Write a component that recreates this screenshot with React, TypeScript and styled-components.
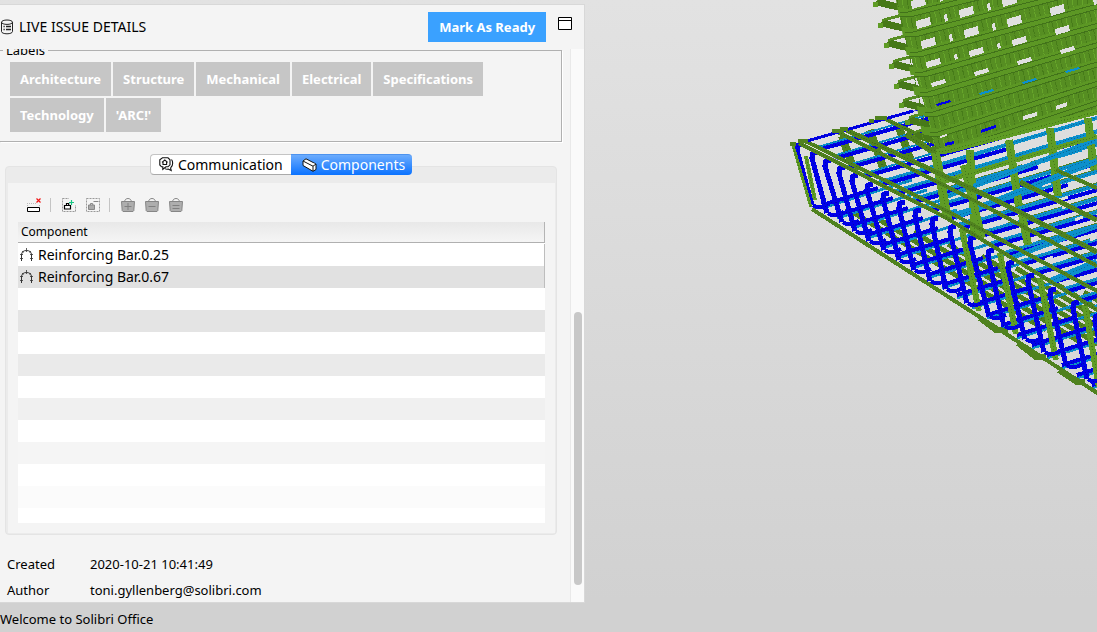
import React from "react";
import styled, { createGlobalStyle, css } from "styled-components";

const GlobalStyle = createGlobalStyle`
  * { box-sizing: border-box; }
  body {
    margin: 0;
    font-family: "Lucida Grande", "Noto Sans", "Open Sans", sans-serif;
    font-size: 13px;
    line-height: 18px;
    color: #000;
  }
  button { font: inherit; color: inherit; border: 0; padding: 0; background: none; }
`;

const Page = styled.div`
  display: flex;
  flex-direction: column;
  height: 100vh;
  overflow: hidden;
  background: linear-gradient(#e2e2e2, #d1d1d1 95%);
`;

const Workspace = styled.div`
  flex: 1;
  min-height: 0;
  display: grid;
  grid-template-columns: minmax(500px, 8fr) 7fr;
`;

const Panel = styled.section`
  display: flex;
  flex-direction: column;
  min-height: 0;
  margin-top: 4px;
  background: #f4f4f4;
  border: 1px solid #d8d8d8;
  border-left: 0;
`;

const PanelHeader = styled.header`
  display: flex;
  align-items: center;
  height: 44px;
  flex: none;
  padding: 0 12px 0 0;
`;

const Title = styled.h1`
  flex: 1;
  margin: 0 0 0 5px;
  font-size: 14px;
  font-weight: 400;
  line-height: 18px;
`;

const ReadyButton = styled.button`
  height: 30px;
  padding: 0 11px;
  background: #3aa1ff;
  color: #fff;
  font-weight: 700;
`;

const WindowButton = styled.button`
  align-self: flex-start;
  margin: 12px 0 0 12px;
  line-height: 0;
`;

const PanelBody = styled.div`
  flex: 1;
  min-height: 0;
  display: flex;
`;

const Content = styled.div`
  flex: 1;
  min-width: 0;
  overflow: hidden;
`;

const ScrollTrack = styled.div`
  flex: none;
  width: 14px;
  padding: 263px 2px 17px;
  border-left: 1px solid #e9e9e9;
  background: #fafafa;
`;

const ScrollThumb = styled.div`
  width: 8px;
  height: 100%;
  margin-left: 1px;
  border-radius: 4px;
  background: #c8c8c8;
`;

const LabelGroup = styled.fieldset`
  display: flex;
  flex-wrap: wrap;
  align-content: flex-start;
  gap: 2px;
  min-width: 0;
  height: 101px;
  margin: -8px 8px 0 0;
  padding: 3px 8px 0 10px;
  border: 1px solid #b0b0b0;
  border-left: 0;
  box-shadow: 1px 1px #fff;
`;

const Legend = styled.legend`
  margin-left: -7px;
  padding: 0 3px;
  line-height: 18px;
`;

const LabelTag = styled.button`
  height: 34px;
  padding: 0 10px;
  background: #c6c6c6;
  color: #fff;
  font-weight: 700;
`;

const Tabs = styled.div`
  position: relative;
  display: flex;
  justify-content: center;
  margin: 12px 13px -9px 5px;
`;

const Tab = styled.button<{ $active?: boolean }>`
  display: flex;
  align-items: center;
  gap: 4px;
  height: 21px;
  padding: 0 8px;
  font-size: 14px;
  line-height: 18px;
  border: 1px solid #c4c4c4;
  border-right: 0;
  border-bottom-color: #aaa;
  border-radius: 4px 0 0 4px;
  background: #fff;
  ${(p) =>
    p.$active &&
    css`
      border: 0;
      border-top: 1px solid #4d93ee;
      border-radius: 0 4px 4px 0;
      background: linear-gradient(#6cacfd, #0a72ff);
      color: #fff;
      padding: 0 7px 0 11px;
    `}
`;

const TabBox = styled.div`
  margin: 0 13px 0 5px;
  border: 1px solid #e4e4e4;
  border-radius: 4px;
  background: #ebebeb;
  padding: 16px 1px 1px 2px;
`;

const TabPage = styled.div`
  padding: 15px 10px 10px;
  background: #f4f4f4;
`;

const Toolbar = styled.div`
  display: flex;
  align-items: center;
  gap: 10px;
  height: 14px;
  margin: 0 0 10px 9px;
`;

const ToolButton = styled.button`
  width: 14px;
  height: 14px;
  line-height: 0;
`;

const Divider = styled.span`
  width: 1px;
  height: 14px;
  margin: 0 1px 0 -1px;
  background: #c4c4c4;
`;

const Grid = styled.div`
  height: 301px;
  overflow: hidden;
  background: #fff;
`;

const Table = styled.table`
  width: 100%;
  border-collapse: separate;
  border-spacing: 0;
`;

const HeadCell = styled.th`
  height: 21px;
  padding: 0 3px;
  border-right: 1px solid #b4b4b4;
  border-bottom: 1px solid #b0b0b0;
  background: linear-gradient(#e8e8e8, #f5f5f5);
  font-size: 12px;
  font-weight: 400;
  line-height: 18px;
  text-align: left;
`;

const TableBody = styled.tbody`
  &::before {
    content: "";
    display: table-row;
    height: 1px;
  }
`;

const Row = styled.tr<{ $tone: string }>`
  background: ${(p) => p.$tone};
`;

const Cell = styled.td<{ $filled?: boolean }>`
  height: 22px;
  padding: 0 1px;
  border-right: ${(p) => (p.$filled ? "1px solid #bdbdbd" : "0")};
  line-height: 18px;
`;

const CellContent = styled.div`
  display: flex;
  align-items: center;
  gap: 4px;
  font-size: 14px;
`;

const Details = styled.dl`
  display: grid;
  grid-template-columns: 83px 1fr;
  margin: 16px 0 0 7px;
  line-height: 26px;
`;

const Term = styled.dt``;
const Value = styled.dd`
  margin: 0;
`;

const Viewport = styled.main`
  min-width: 0;
  min-height: 0;
  overflow: hidden;
`;

const Scene = styled.svg`
  display: block;
  width: 100%;
  height: 100%;
`;

const StatusBar = styled.footer`
  flex: none;
  height: 29px;
  padding-top: 7px;
  background: #d1d1d1;
`;

/* ---------- icons ---------- */

const DatabaseIcon = () => (
  <svg width="14" height="16" viewBox="0 0 14 16" fill="none" stroke="#222">
    <ellipse cx="7" cy="3.2" rx="5.5" ry="2.2" />
    <path d="M1.5 3.2v9.4c0 1.2 2.4 2.2 5.5 2.2s5.5-1 5.5-2.2V3.2" />
    <path d="M6 7.5h5M6 10.5h5M3.5 7.5h1.2M3.5 10.5h1.2" strokeWidth="1.3" />
  </svg>
);

const WindowIcon = () => (
  <svg width="14" height="13" viewBox="0 0 14 13" fill="#fff" stroke="#000">
    <path d="M.5.5h13v12H.5zM.5 3.5h13" />
  </svg>
);

const ChatIcon = () => (
  <svg width="15" height="15" viewBox="0 0 15 15" fill="none" stroke="#111" strokeWidth="1.1">
    <path d="M3.5.8h5.5l2 2v5l-2 2H7l-3.2 2.5V9.8H2.5L.8 8V2.800z" />
    <path d="M3 5.300 5.800 3l2.800 2.300M4 4.800V7.500h3.600V4.800" />
    <path d="M12.500 2.500c1.600 2 1.600 5.500-.3 7.500l-.6 1 .6 2.500-3-1.400c-1.200.2-2.400 0-3.200-.5" />
  </svg>
);

const BeamIcon = () => (
  <svg width="15" height="14" viewBox="0 0 15 14" fill="#fff" stroke="#111" strokeLinejoin="round">
    <path d="M1 3 4 .8 14 6v5.500L11 13.300 1 7.500z" />
    <path d="m1 3 10 5.200L14 6M11 8.200v5" />
  </svg>
);

const RemoveRowIcon = () => (
  <svg width="14" height="14" viewBox="0 0 14 14" fill="none">
    <path d="M.5 9.500h12v4H.5z" stroke="#000" fill="#fff" />
    <path d="M0 5.500h9M.5 5v4M12.500 7v2" stroke="#bbb" strokeDasharray="1 1" />
    <path d="m9.500.500 4 4m0-4-4 4" stroke="#f01818" strokeWidth="1.200" />
  </svg>
);

const BasketFrameIcon = ({ add }: { add?: boolean }) => (
  <svg width="14" height="14" viewBox="0 0 14 14" fill="none">
    <path d="M.5.500h13v13H.5z" stroke="#999" strokeDasharray="2 1" />
    {add ? (
      <>
        <path d="M7 0h7v7H7z" fill="#f4f4f4" />
        <path d="M2.500 7.500h6v3.500h-6zM4.500 7.500V5.500h2.200V7.500" stroke="#000" strokeWidth="1.200" fill="#fff" />
        <path d="M9.500 2v5M7 4.500h5" stroke="#16c784" strokeWidth="1.200" />
      </>
    ) : (
      <>
        <path d="M2.500 7h6v4.500h-6z" stroke="#888" fill="#aaa" />
        <path d="M4.500 7V5.500h2.200V7M7.500 3.500h5" stroke="#888" />
      </>
    )}
  </svg>
);

const BasketIcon = ({ mark }: { mark: string }) => (
  <svg width="14" height="14" viewBox="0 0 14 14" fill="none" stroke="#868686">
    <path d="M3.500 3.500C4 1.500 5.200.5 7 .5s3 1 3.500 3" />
    <path d="M.5 3.500h13l-.7 9.200-.8.800H2l-.8-.8z" fill="#aeaeae" />
    <path d={mark} stroke="#808080" />
  </svg>
);

const RebarIcon = () => (
  <svg width="15" height="14" viewBox="0 0 15 14" fill="none" stroke="#333">
    <path d="M2.500 13V7c0-3 2-4.500 5-4.500s5 1.500 5 4.500v6" />
    <path d="M7.500 0v4M1 6.500h3M1 10.500h3M11 6.500h3M11 10.500h3M3 3l1.500 1.500M12 3l-1.500 1.500" strokeWidth=".8" />
  </svg>
);

/* ---------- reinforcement model ---------- */

type Tone = "green" | "olive" | "blue" | "cyan";
const TONES: Record<Tone, [string, string]> = {
  green: ["#457a18", "#5f9c25"],
  olive: ["#3d6b17", "#50821f"],
  blue: ["#0000b4", "#0000e8"],
  cyan: ["#086a98", "#0c90cc"],
};

const Bar = ({ d, w = 4, tone }: { d: string; w?: number; tone: Tone }) => (
  <g fill="none" strokeLinejoin="round">
    <path d={d} stroke={TONES[tone][1]} strokeWidth={w} />
    <path d={d} stroke={TONES[tone][0]} strokeWidth={1} strokeDasharray="1 2" />
  </g>
);

const range = (n: number) => Array.from({ length: n }, (_, i) => i);

// Stirrups along the front face: top corner, then bottom corner.
const STIRRUPS: [number, number, number, number][] = [
  [797, 147, 812, 207], [812, 155, 827, 215], [825, 163, 842, 224], [839, 170, 855, 233],
  [852, 178, 869, 243], [867, 187, 884, 252], [883, 196, 899, 262], [899, 205, 914, 272],
  [915, 213, 930, 283], [932, 221, 946, 291], [950, 229, 967, 305], [970, 240, 989, 318],
  [988, 253, 1004, 328], [1008, 265, 1025, 341], [1028, 278, 1044, 354], [1050, 292, 1066, 367],
  [1073, 305, 1087, 381], [1095, 318, 1110, 396],
];

// Left tips of the column ties.
const TIES: [number, number][] = [
  [874, 3], [879, 24], [885, 44], [890, 65], [895, 85], [900, 104], [906, 121], [911, 136],
];

const OPENING_HEIGHTS = [8, 8, 8, 6, 4, 2];
const OPENING_FILLS = ["#e0e0e0", "#e0e0e0", "#e0e0e0", "#e0e0e0", "#e0e0e0", "#0c90cc"];

const Model = () => (
  <Scene viewBox="585 0 512 603" preserveAspectRatio="xMaxYMin slice" shapeRendering="crispEdges" role="img" aria-label="Reinforcement model">
    <defs>
      <clipPath id="base"><path d="M794 145 913 111 1097 60V391L814 209z" /></clipPath>
      <clipPath id="top"><path d="M805 142 913 111 1097 60V308L947 219z" /></clipPath>
      <clipPath id="face"><path d="M896 0H1097V113L938 154 925 148z" /></clipPath>
    </defs>

    <g clipPath="url(#base)">
      {range(8).map((i) => (
        <Bar key={i} tone="olive" w={5} d={`M${846 + i * 34} ${208 + i * 12}l200 122`} />
      ))}
      {range(22).map((i) => {
        const x = 822 + i * 15;
        const y = 210 + i * 10;
        return (
          <g key={i}>
            <Bar tone="cyan" w={3} d={`M${x} ${y - 2}l90 -28`} />
            <Bar tone="blue" w={4} d={`M${x} ${y - 5}l56 -17`} />
          </g>
        );
      })}
    </g>

    <g clipPath="url(#top)">
      {range(4).map((i) => (
        <Bar key={i} tone="olive" w={8} d={`M${842 + i * 28} ${136 - i * 6}l14 40`} />
      ))}
      {range(22).map((i) => {
        const x = 803 + i * 15;
        const y = 141 + i * 9;
        return (
          <g key={i}>
            {i > 6 && <Bar tone="olive" w={3} d={`M${x + 40} ${y - 16}l200 -60`} />}
            <Bar tone="cyan" w={i > 4 ? 4 : 2} d={`M${x} ${y - 3}l${i > 3 ? 320 : 120} -${i > 3 ? 95 : 35}`} />
            <Bar tone="blue" w={4} d={`M${x} ${y}l${i % 2 ? 130 : 190} -${i % 2 ? 37 : 54}`} />
          </g>
        );
      })}
      {range(8).map((i) => (
        <path key={i} d={`M${962 + i * 20} ${(i % 3) * 26 + 176 - i * 4}l9 -3M${1000 + i * 15} ${(i % 4) * 20 + 200}l8 -3`} stroke="#dcdcdc" strokeWidth="3" />
      ))}
      {[[970, 150, 975, 238], [1009, 140, 1019, 206], [1050, 128, 1058, 196], [1088, 118, 1094, 170], [1022, 214, 1028, 245]].map(
        ([a, b, c, e]) => <Bar key={a} tone="green" w={8} d={`M${a} ${b}L${c} ${e}`} />,
      )}
      <Bar tone="cyan" w={5} d="M945 197 1097 140" />
      <Bar tone="cyan" w={6} d="M955 217 1097 161" />
      <Bar tone="cyan" w={5} d="M1000 262 1097 226" />
      <Bar tone="cyan" w={7} d="M1040 286 1097 262" />
      <Bar tone="green" w={9} d="M935 150 950 232" />
      <Bar tone="green" w={8} d="M964 165 982 238" />
      <Bar tone="green" w={5} d="M945 181 1097 136" />
      <Bar tone="olive" w={5} d="M1020 182 1097 220" />
      <Bar tone="olive" w={4} d="M1056 170 1097 188" />
      <Bar tone="olive" w={4} d="M883 118 940 145" />
      <Bar tone="olive" w={5} d="M842 128 1000 202 1097 252" />
      <Bar tone="olive" w={4} d="M836 131 985 206 1097 266" />
    </g>

    <path d="M812 209 1000 330 1099 394" stroke="#50821f" strokeWidth="4" fill="none" />
    <path d="M980 318l16 12 12 1M1018 343l18 14 10 0M1059 370l18 12 8 0" stroke="#50821f" strokeWidth="6" fill="none" />

    {STIRRUPS.map(([a, b, c, e], i) => (
      <g key={a}>
        {i > 9 && i % 2 === 0 && <Bar tone="green" w={6} d={`M${a + 12} ${b}L${c + 12} ${e + 6}`} />}
        <Bar tone="blue" w={4} d={`M${c + 1} ${e - 2}l3 2h6l7 -3`} />
        <Bar tone="blue" w={5} d={`M${a + 6} ${b - 3}l-5 1l-1 5L${c} ${e - 2}`} />
      </g>
    ))}
    <Bar tone="green" w={3} d="M793 145 811 207" />
    <Bar tone="green" w={4} d="M806 156 815 200" />
    <Bar tone="olive" w={4} d="M799 143 945 217 1099 311" />
    <Bar tone="olive" w={4} d="M805 141 947 211 1099 292" />
    <Bar tone="blue" w={3} d="M807 141 913 111" />
    <path d="M790 144h6M798 141h10M832 131h12M840 129h8M869 121h5M875 118h12" stroke="#50821f" strokeWidth="4" />

    {TIES.map(([x, y]) => (
      <g key={y}>
        <path d={`M${x + 38} ${y - 13}L${x + 5} ${y - 4}v6`} stroke="#568e22" strokeWidth="3" fill="none" />
        <path d={`M${x + 1} ${y - 1}L${x + 7} ${y - 4}L${x + 43} ${y + 6}V${y + 12}L${x + 5} ${y + 3}z`} fill="#477919" />
        <path d={`M${x - 1} ${y - 1}h5v5h-5z`} fill="#5f9c25" />
      </g>
    ))}
    <g clipPath="url(#face)">
      <path d="M895 0H1097V113L938 154z" fill="#568e22" />
      {range(60).map((i) => (
        <path key={i} d={`M${862 + i * 5} 0l36 160`} stroke={i % 2 ? "#467b19" : "#66a52a"} strokeWidth="1" strokeDasharray="5 1" />
      ))}
      {range(9).map((i) => {
        const x = 900 + i * 5;
        const y = 12 + i * 20;
        const rise = 51 + i;
        return (
          <g key={i}>
            <path d={`M${x - 20} ${y - 4}l28 5L1120 ${y - rise}`} stroke="#5c9724" strokeWidth="8" fill="none" />
            <path d={`M${x} ${y + 4}l10 1L1120 ${y - rise + 4}M${x} ${y}l8 0L1120 ${y - rise - 1}`} stroke="#41721a" fill="none" />
          </g>
        );
      })}
      {OPENING_HEIGHTS.flatMap((h, r) =>
        range(6).map((c) => {
          const x = 911 + r * 5 + c * 43;
          const y = 4 + r * 20 - c * 11;
          return (
            <g key={`${r}-${c}`} fill={r === 5 && c === 0 ? "#0000e8" : OPENING_FILLS[r]}>
              <path d={`M${x} ${y - h / 2 + 1}l14 -4l1 ${h}l-14 4z`} />
              {r < 4 && c < 2 && <path d={`M${x + 28} ${y - 9}l3 -1l1 ${h - 1}l-3 1z`} />}
            </g>
          );
        }),
      )}
      <path d="M1023 116l14 -4v4l-14 4zM1056 106l11 -4v4l-11 4zM940 136l7 -2v2l-7 2z" fill="#e0e0e0" />
      <path d="M981 130l15 -5v3l-15 5zM945 143l9 -2v3l-9 2z" fill="#0000e8" />
    </g>
    <Bar tone="olive" w={6} d="M906 134 930 150 946 151" />
    <Bar tone="green" w={6} d="M936 152 950 150 1099 111" />
  </Scene>
);

/* ---------- page ---------- */

const LABELS = ["Architecture", "Structure", "Mechanical", "Electrical", "Specifications", "Technology", "'ARC!'"];
const COMPONENTS = ["Reinforcing Bar.0.25", "Reinforcing Bar.0.67"];
const FILLER = ["#fff", "#e4e4e4", "#fff", "#eaeaea", "#fff", "#f0f0f0", "#fff", "#f5f5f5", "#fff", "#fbfbfb", "#fff"];

export default function App() {
  return (
    <Page>
      <GlobalStyle />
      <Workspace>
        <Panel>
          <PanelHeader>
            <DatabaseIcon />
            <Title>LIVE ISSUE DETAILS</Title>
            <ReadyButton>Mark As Ready</ReadyButton>
            <WindowButton aria-label="Maximize"><WindowIcon /></WindowButton>
          </PanelHeader>
          <PanelBody>
            <Content>
              <LabelGroup>
                <Legend>Labels</Legend>
                {LABELS.map((l) => <LabelTag key={l}>{l}</LabelTag>)}
              </LabelGroup>
              <Tabs role="tablist">
                <Tab role="tab" aria-selected={false}><ChatIcon />Communication</Tab>
                <Tab role="tab" aria-selected $active><BeamIcon />Components</Tab>
              </Tabs>
              <TabBox>
                <TabPage role="tabpanel">
                  <Toolbar>
                    <ToolButton aria-label="Remove component"><RemoveRowIcon /></ToolButton>
                    <Divider />
                    <ToolButton aria-label="Add basket"><BasketFrameIcon add /></ToolButton>
                    <ToolButton aria-label="Subtract basket"><BasketFrameIcon /></ToolButton>
                    <Divider />
                    <ToolButton aria-label="Add to selection basket"><BasketIcon mark="M7 5v7M3.500 8.500h7" /></ToolButton>
                    <ToolButton aria-label="Remove from selection basket"><BasketIcon mark="M3.500 8.500h7" /></ToolButton>
                    <ToolButton aria-label="Set selection basket"><BasketIcon mark="M3.500 7.500h7M3.500 10.500h7" /></ToolButton>
                  </Toolbar>
                  <Grid>
                    <Table>
                      <thead><tr><HeadCell scope="col">Component</HeadCell></tr></thead>
                      <TableBody>
                        {COMPONENTS.map((name, i) => (
                          <Row key={name} $tone={i % 2 ? "#e1e1e1" : "#fff"}>
                            <Cell $filled><CellContent><RebarIcon />{name}</CellContent></Cell>
                          </Row>
                        ))}
                        {FILLER.map((tone, i) => (
                          <Row key={i} $tone={tone}><Cell /></Row>
                        ))}
                      </TableBody>
                    </Table>
                  </Grid>
                </TabPage>
              </TabBox>
              <Details>
                <Term>Created</Term><Value>2020-10-21 10:41:49</Value>
                <Term>Author</Term><Value>toni.gyllenberg@solibri.com</Value>
              </Details>
            </Content>
            <ScrollTrack><ScrollThumb /></ScrollTrack>
          </PanelBody>
        </Panel>
        <Viewport><Model /></Viewport>
      </Workspace>
      <StatusBar>Welcome to Solibri Office</StatusBar>
    </Page>
  );
}
